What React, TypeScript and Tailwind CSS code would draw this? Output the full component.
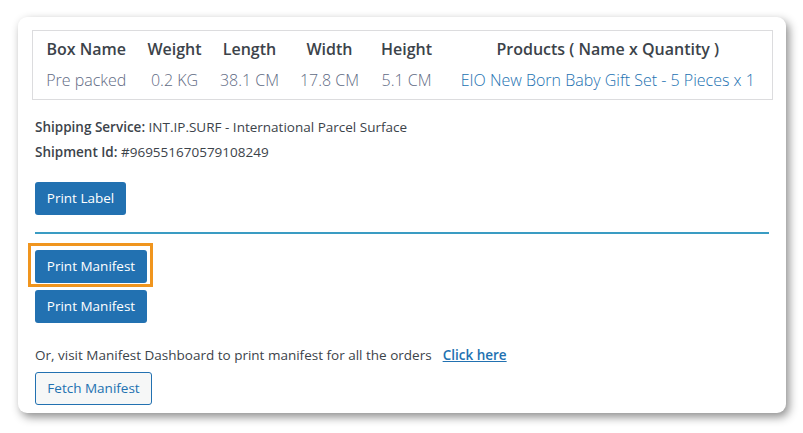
import React from "react";

const cols = [
  { title: "Box Name", value: "Pre packed", w: "w-[107px]" },
  { title: "Weight", value: "0.2 KG", w: "w-[70px]" },
  { title: "Length", value: "38.1 CM", w: "w-[80px]" },
  { title: "Width", value: "17.8 CM", w: "w-[80px]" },
  { title: "Height", value: "5.1 CM", w: "w-[74px]" },
];

export default function App() {
  return (
    <div
      className="w-[803px] h-[433px] bg-white pt-[17px] pl-[18px] text-[#3c434a]"
      style={{ fontFamily: '"Open Sans", "Noto Sans", sans-serif' }}
    >
      {/* card */}
      <div className="w-[768px] h-[396px] bg-white rounded-[9px] shadow-[3px_4px_10px_rgba(0,0,0,0.45)] px-[14px] pt-[13px]">
        {/* box table */}
        <table className="border border-[#dcdcde] border-collapse table-fixed w-[741px]">
          <thead>
            <tr className="h-[33px]">
              {cols.map((c) => (
                <th
                  key={c.title}
                  className={`${c.w} text-center text-[16px] font-semibold text-[#3c434a] pt-[3px]`}
                >
                  {c.title}
                </th>
              ))}
              <th className="text-center text-[16px] font-semibold text-[#3c434a] pt-[3px]">
                Products ( Name x Quantity )
              </th>
            </tr>
          </thead>
          <tbody>
            <tr className="h-[36px]">
              {cols.map((c) => (
                <td
                  key={c.title}
                  className="text-center text-[16px] font-light text-[#5f6b84] pb-[3px]"
                >
                  {c.value}
                </td>
              ))}
              <td className="text-center text-[16px] font-light text-[#2271b1] pb-[3px]">
                EIO New Born Baby Gift Set - 5 Pieces x 1
              </td>
            </tr>
          </tbody>
        </table>

        {/* shipment info */}
        <div className="mt-[15px] pl-[3px] text-[13.5px] leading-[25px]">
          <p>
            <span className="font-semibold">Shipping Service:</span> INT.IP.SURF -
            International Parcel Surface
          </p>
          <p>
            <span className="font-semibold">Shipment Id:</span> #969551670579108249
          </p>
        </div>

        <div className="pl-[3px] mt-[17px]">
          <button className="h-[33px] w-[91px] bg-[#2271b1] text-white text-[13.5px] rounded-[3px]">
            Print Label
          </button>
        </div>

        <div className="ml-[3px] mt-[17px] h-[2px] w-[734px] bg-[#3a9cc3]" />

        {/* manifest buttons */}
        <div className="mt-[9px] flex flex-col items-start">
          <div className="-ml-[4px] border-[3px] border-[#f0951e] pl-[4px] pr-[3px] pt-[4px] pb-[1px]">
            <button className="block h-[33px] w-[112px] bg-[#2271b1] text-white text-[13.5px] rounded-[3px]">
              Print Manifest
            </button>
          </div>
          <div className="pl-[3px] mt-[3px]">
            <button className="block h-[33px] w-[112px] bg-[#2271b1] text-white text-[13.5px] rounded-[3px]">
              Print Manifest
            </button>
          </div>
        </div>

        <p className="pl-[3px] mt-[20px] text-[13.5px] leading-[25px]">
          Or, visit Manifest Dashboard to print manifest for all the orders
          <a className="ml-[11px] font-semibold text-[#2271b1] underline">Click here</a>
        </p>

        <div className="pl-[3px] mt-[4px]">
          <button className="h-[33px] w-[117px] bg-[#f6f7f7] border border-[#2271b1] text-[#2271b1] text-[13.5px] rounded-[3px]">
            Fetch Manifest
          </button>
        </div>
      </div>
    </div>
  );
}
